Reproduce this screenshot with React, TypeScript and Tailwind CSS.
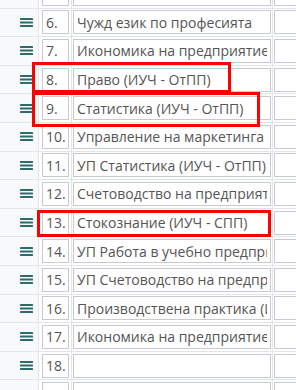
import React from "react";

const rows: { n: number | null; name: string }[] = [
  { n: 5, name: "" },
  { n: 6, name: "Чужд език по професията" },
  { n: 7, name: "Икономика на предприятието" },
  { n: 8, name: "Право (ИУЧ - ОтПП)" },
  { n: 9, name: "Статистика (ИУЧ - ОтПП)" },
  { n: 10, name: "Управление на маркетинга" },
  { n: 11, name: "УП Статистика (ИУЧ - ОтПП)" },
  { n: 12, name: "Счетоводство на предприятието" },
  { n: 13, name: "Стокознание (ИУЧ - СПП)" },
  { n: 14, name: "УП Работа в учебно предприятие" },
  { n: 15, name: "УП Счетоводство на предприятието" },
  { n: 16, name: "Производствена практика (ИУЧ - СПП)" },
  { n: 17, name: "Икономика на предприятието" },
  { n: 18, name: "" },
  { n: 19, name: "" },
];

function Bars() {
  return (
    <svg width="13" height="9" viewBox="0 0 13 9" className="block">
      <rect x="0" y="0" width="13" height="2" rx="0.6" fill="#2f6b6b" />
      <rect x="0" y="3.5" width="13" height="2" rx="0.6" fill="#2f6b6b" />
      <rect x="0" y="7" width="13" height="2" rx="0.6" fill="#2f6b6b" />
    </svg>
  );
}

const inputCls =
  "h-[24px] w-full border border-[#c6cbd3] bg-white px-[3px] text-[14px] text-[#555] outline-none";

function Row({ n, name, idx }: { n: number | null; name: string; idx: number }) {
  return (
    <div className="flex h-[28.6px] items-center border-b border-[#e3e5e8]">
      <div className="flex h-full w-[39px] shrink-0 items-center border-r border-[#e3e5e8] bg-[#f8f9fa] pl-[20px]">
        <Bars />
      </div>
      <div className="flex h-full w-[33px] shrink-0 items-center border-r border-[#e3e5e8] pl-[3px] pr-[2px]">
        <input readOnly value={n ? `${n}.` : ""} className={inputCls} />
      </div>
      <div className="flex h-full w-[201px] shrink-0 items-center border-r border-[#e3e5e8] px-[1px]">
        <input readOnly value={name} className={inputCls} />
      </div>
      <div className="flex h-full w-[40px] shrink-0 items-center pl-[1px]">
        <input readOnly value="" className={inputCls} aria-label={`extra ${idx}`} />
      </div>
    </div>
  );
}

export default function App() {
  return (
    <div
      className="relative h-[390px] w-[296px] overflow-hidden bg-white"
      style={{ fontFamily: '"Open Sans", "Noto Sans", sans-serif' }}
    >
      <div className="-mt-[20px]">
        {rows.map((r, i) => (
          <Row key={i} idx={i} n={r.n} name={r.name} />
        ))}
      </div>
      <div className="pointer-events-none absolute left-[32px] top-[62px] h-[31px] w-[199px] border-[3.5px] border-[#f00]" />
      <div className="pointer-events-none absolute left-[32px] top-[92px] h-[35px] w-[228px] border-[3.5px] border-[#f00]" />
      <div className="pointer-events-none absolute left-[37px] top-[210px] h-[27px] w-[234px] border-[3px] border-[#f00]" />
    </div>
  );
}
